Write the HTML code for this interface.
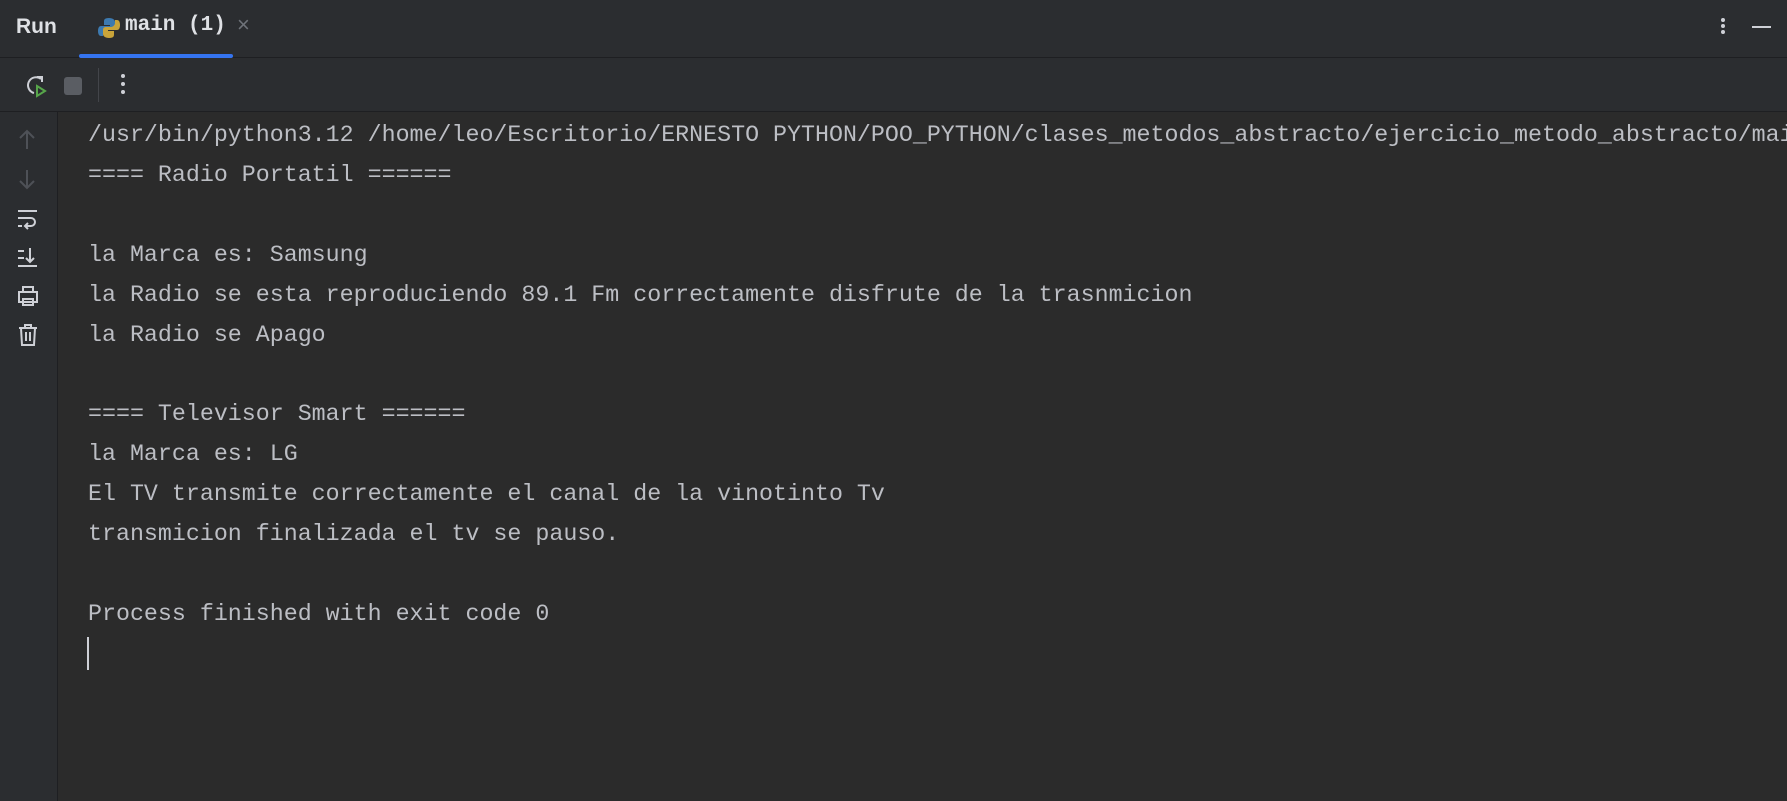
<!DOCTYPE html>
<html><head><style>
body{margin:0;width:1787px;height:801px;background:#2b2b2b;overflow:hidden;position:relative;font-family:"Liberation Sans",sans-serif}
.hdr{position:absolute;left:0;top:0;width:1787px;height:57px;background:#2b2d30;border-bottom:1px solid #1e1f22}
.tb{position:absolute;left:0;top:58px;width:1787px;height:53px;background:#2b2d30;border-bottom:1px solid #1e1f22}
.gut{position:absolute;left:0;top:112px;width:57px;height:689px;background:#2b2d30;border-right:1px solid #1e1f22}
.con{position:absolute;left:88px;top:116px;font-family:"Liberation Mono",monospace;font-size:23.3px;line-height:39.9px;color:#bcbec4;white-space:pre}
</style></head><body>
<div class="hdr">
<div style="position:absolute;left:16px;top:15px;font-weight:bold;font-size:21px;color:#dfe1e5">Run</div>
<svg style="position:absolute;left:98px;top:17px" width="22" height="22" viewBox="0 0 22 22"><path d="M11 1c-5 0-5 2-5 4v3h6v1H3C1 9 0 11 0 14s1 5 3 5h2v-3c0-2 2-4 4-4h5c2 0 3-1 3-3V5c0-2-2-4-6-4z" fill="#3d7ab0"/><path d="M11 21c5 0 5-2 5-4v-3h-6v-1h9c2 0 3-2 3-5s-1-5-3-5h-2v3c0 2-2 4-4 4H8c-2 0-3 1-3 3v4c0 2 2 4 6 4z" fill="#c9a43a"/></svg>
<div style="position:absolute;left:125px;top:14px;font-weight:bold;font-size:21px;color:#dfe1e5;font-family:'Liberation Mono',monospace">main (1)</div>
<div style="position:absolute;left:237px;top:12px;font-size:22px;color:#6f737a">×</div>
<div style="position:absolute;left:79px;top:54px;width:154px;height:4px;background:#3574f0;border-radius:2px"></div>
<div style="position:absolute;left:1721px;top:18px;width:4px;height:4px;border-radius:2px;background:#ced0d6;box-shadow:0 6px 0 #ced0d6,0 12px 0 #ced0d6"></div>
<div style="position:absolute;left:1752px;top:26px;width:19px;height:2px;background:#ced0d6"></div>
</div>
<div class="tb">
<svg style="position:absolute;left:24px;top:16px" width="24" height="24" viewBox="0 0 24 24"><path d="M17 5A8 8 0 1 0 10 19" fill="none" stroke="#ced0d6" stroke-width="2"/><path d="M13 3h5v5" fill="none" stroke="#ced0d6" stroke-width="2"/><path d="M13 12l8 5-8 5z" fill="none" stroke="#57a64a" stroke-width="2"/></svg>
<div style="position:absolute;left:64px;top:19px;width:18px;height:18px;border-radius:3px;background:#5a5d63"></div>
<div style="position:absolute;left:98px;top:10px;width:1px;height:34px;background:#43454a"></div>
<div style="position:absolute;left:121px;top:16px;width:4px;height:4px;border-radius:2px;background:#ced0d6;box-shadow:0 8px 0 #ced0d6,0 16px 0 #ced0d6"></div>
</div>
<div class="gut">
<svg style="position:absolute;left:15px;top:0" width="26" height="250" viewBox="0 0 26 250" fill="none" stroke-width="2">
<path d="M12 19v18M5 26l7-7 7 7M12 58v18M5 69l7 7 7-7" stroke="#4e5157"/>
<g stroke="#ced0d6">
<path d="M3 99h19M3 106h13a4 4 0 0 1 0 8h-5M13 111l-3 3 3 3M3 114h4"/>
<path d="M3 139h6M3 146h6M3 154h19M15 136v14M11 146l4 4 4-4"/>
<path d="M8 180v-5h10v5M4 180h18v10H4zM8 187h10v6H8z"/>
<path d="M4 216h18M10 216v-3h6v3M6 216l1 17h12l1-17M11 220v9M15 220v9"/>
</g></svg>
</div>
<div class="con">/usr/bin/python3.12 /home/leo/Escritorio/ERNESTO PYTHON/POO_PYTHON/clases_metodos_abstracto/ejercicio_metodo_abstracto/main.py
==== Radio Portatil ======

la Marca es: Samsung
la Radio se esta reproduciendo 89.1 Fm correctamente disfrute de la trasnmicion
la Radio se Apago

==== Televisor Smart ======
la Marca es: LG
El TV transmite correctamente el canal de la vinotinto Tv
transmicion finalizada el tv se pauso.

Process finished with exit code 0</div>
<div style="position:absolute;left:87px;top:637px;width:2px;height:33px;background:#ced0d6"></div>
</body></html>
